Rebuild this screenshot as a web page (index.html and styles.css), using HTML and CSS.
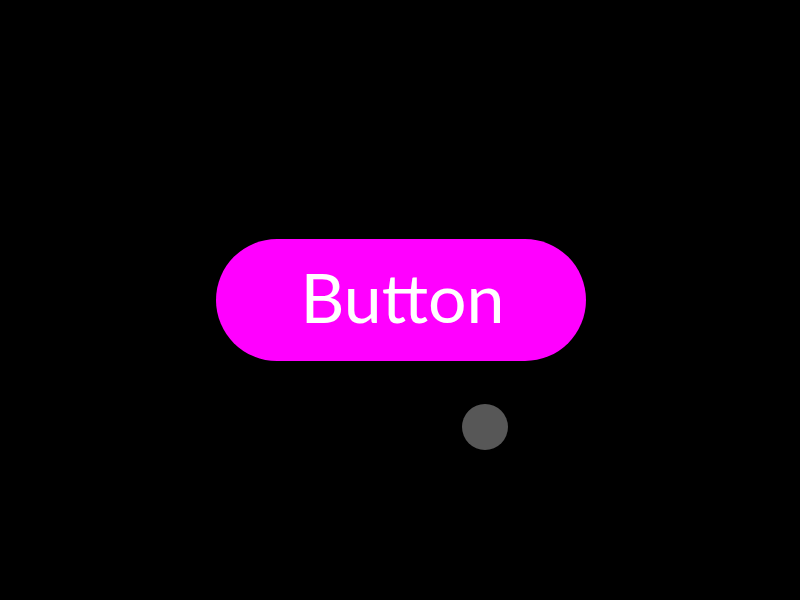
FILE: index.html
```html
<!DOCTYPE html>
<html>
<head>
<meta charset="utf-8">
<link rel="stylesheet" href="styles.css">
</head>
<body>
<main class="stage">
  <button class="pill">Button</button>
  <span class="touch"></span>
</main>
</body>
</html>
```
FILE: styles.css
```css
html, body {
  margin: 0;
  padding: 0;
  background: #000;
  width: 800px;
  height: 600px;
  overflow: hidden;
}
.stage {
  position: relative;
  width: 800px;
  height: 600px;
  display: flex;
  align-items: center;
  justify-content: center;
}
.pill {
  width: 370px;
  height: 122px;
  border: none;
  border-radius: 61px;
  background: #ff00ff;
  color: #fff;
  font-family: Lato, "Liberation Sans", sans-serif;
  font-size: 68px;
  font-weight: 400;
  padding: 0 0 7px 4px;
  margin: 0 0 0 1px;
  line-height: 1;
  cursor: pointer;
}
.touch {
  position: absolute;
  left: 462px;
  top: 404px;
  width: 46px;
  height: 46px;
  border-radius: 50%;
  background: #575757;
}
```
